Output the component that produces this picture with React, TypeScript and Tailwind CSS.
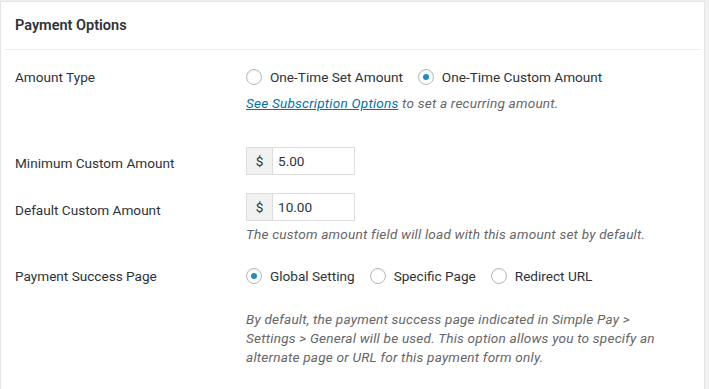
import React from "react";

function Radio({ checked }: { checked?: boolean }) {
  return (
    <span className="flex h-4 w-4 shrink-0 items-center justify-center rounded-full border border-[#b4b9be] bg-white shadow-[inset_0_1px_2px_rgba(0,0,0,0.07)]">
      {checked && <span className="h-[6px] w-[6px] rounded-full bg-[#1e8cbe]" />}
    </span>
  );
}

function Option({ label, checked }: { label: string; checked?: boolean }) {
  return (
    <label className="flex items-center gap-2">
      <Radio checked={checked} />
      <span>{label}</span>
    </label>
  );
}

function Money({ value }: { value: string }) {
  return (
    <div className="flex h-[28px] w-[109px] border border-[#dddddd] bg-white">
      <div className="flex w-[26px] items-center justify-center border-r border-[#dddddd] bg-[#f1f1f1]">$</div>
      <div className="flex items-center pl-[5px]">{value}</div>
    </div>
  );
}

export default function App() {
  return (
    <div
      className="h-[389px] w-[709px] bg-[#f1f1f1] pr-[4px] pt-[1px] text-[13.6px] text-[#2c3338]"
      style={{ fontFamily: "Roboto, 'Liberation Sans', sans-serif" }}
    >
      <div className="h-[388px] border border-b-0 border-[#e5e5e5] bg-white">
        <div className="mx-[3px] flex h-[48px] items-center border-b border-[#eeeeee] px-[11px] pt-[1px] text-[14.5px] font-semibold">
          Payment Options
        </div>
        <div className="pl-[14px]">
          <div className="flex pt-[17px]">
            <div className="w-[231px] leading-[20px]">Amount Type</div>
            <div>
              <div className="flex h-[20px] items-center gap-[15px]">
                <Option label="One-Time Set Amount" />
                <Option label="One-Time Custom Amount" checked />
              </div>
              <div className="mt-[6px] leading-[20px] italic tracking-[0.2px] text-[#666666]">
                <a className="text-[#0073aa] underline">See Subscription Options</a> to set a recurring amount.
              </div>
            </div>
          </div>
          <div className="mt-[34px] flex items-center">
            <div className="w-[231px] pt-[4px]">Minimum Custom Amount</div>
            <Money value="5.00" />
          </div>
          <div className="mt-[18px] flex">
            <div className="w-[231px] pt-[7px]">Default Custom Amount</div>
            <div>
              <Money value="10.00" />
              <div className="mt-[3px] leading-[20px] italic tracking-[0.2px] text-[#666666]">
                The custom amount field will load with this amount set by default.
              </div>
            </div>
          </div>
          <div className="mt-[22px] flex">
            <div className="w-[231px] leading-[20px]">Payment Success Page</div>
            <div>
              <div className="flex h-[20px] items-center gap-[15px]">
                <Option label="Global Setting" checked />
                <Option label="Specific Page" />
                <Option label="Redirect URL" />
              </div>
              <p className="mt-[24px] w-[416px] leading-[19px] italic tracking-[0.2px] text-[#666666]">
                By default, the payment success page indicated in Simple Pay &gt; Settings &gt; General will be used. This option allows you to specify an alternate page or URL for this payment form only.
              </p>
            </div>
          </div>
        </div>
      </div>
    </div>
  );
}
